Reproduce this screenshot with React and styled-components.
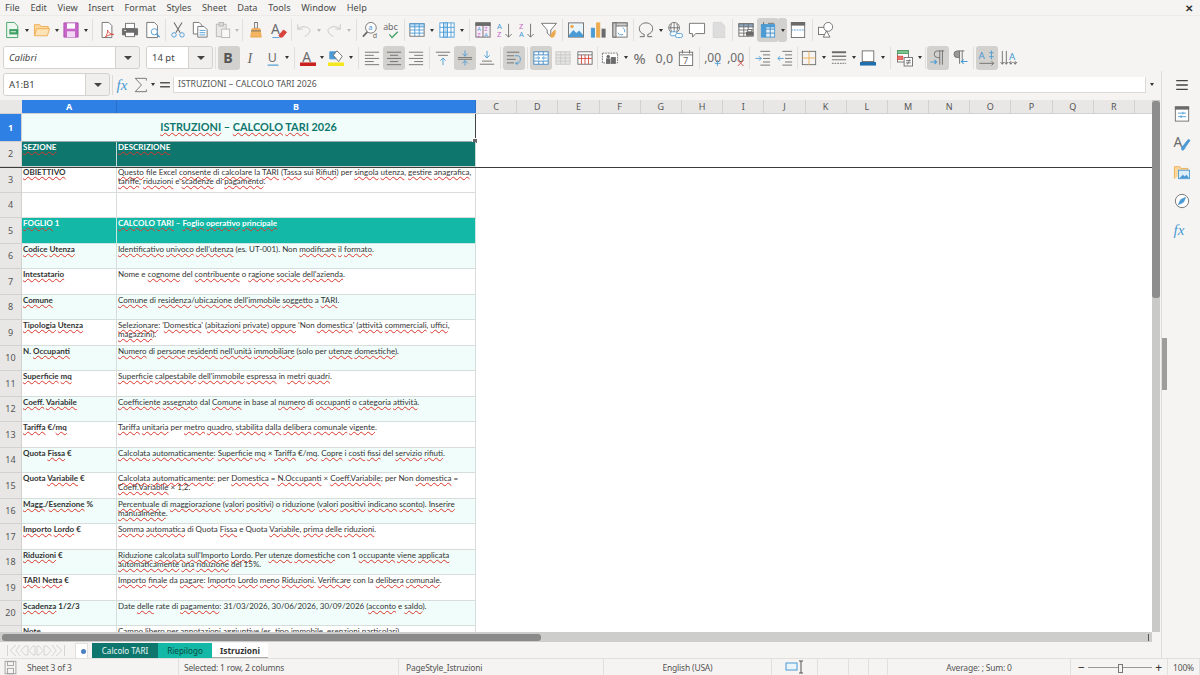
import React from 'react'
import styled, { createGlobalStyle } from 'styled-components'

const Global = createGlobalStyle`
  html, body { margin: 0; padding: 0; background: #f5f4f2; overflow: hidden; }
  * { box-sizing: border-box; }
`

const BLUE = '#4a9ad4'
const GREY = '#6b6b6b'
const ORANGE = '#eeaa4e'
const PINK = '#c768c9'
const RED = '#d8443c'
const GREEN = '#3d9f62'

const Svg = ({ children, size = 16 }) => (
  <svg width={size} height={size} viewBox="0 0 18 18" fill="none" stroke={GREY} strokeWidth="1" overflow="visible">
    {children}
  </svg>
)

const Txt = ({ x, y, size = 8, fill = BLUE, weight = 400, family = '"Noto Sans", sans-serif', style, children }) => (
  <text x={x} y={y} fontSize={size} fill={fill} stroke="none" fontWeight={weight} fontFamily={family} fontStyle={style}>{children}</text>
)

const Lines = ({ rows, color = GREY }) => rows.map(([x1, x2, y], i) => <path key={i} d={`M${x1} ${y}H${x2}`} stroke={color} />)

const GridIcon = ({ color = BLUE, fill = '#bcdcf3', stroke = GREY }) => (
  <>
    <rect x="1" y="2" width="16" height="14" fill="#fff" stroke={stroke} />
    <rect x="1" y="2" width="16" height="3.500" fill={fill} stroke={color} />
    <path d="M6.500 2v14M11.500 2v14M1 9h16M1 12.500h16" stroke={color} />
  </>
)

const icons = {
  newDoc: <><path d="M3 .5h8.500l4 4v13H3z" fill="#eef7f0" stroke={GREEN} /><rect x="6" y="8" width="10" height="6" fill={GREEN} stroke="none" /><path d="M7.500 11h6" stroke="#fff" /></>,
  open: <><path d="M.5 15.500V3h6l1.500 2h8v2.500" fill="#fbd79b" stroke={ORANGE} /><path d="M.5 15.500l2.500-8h14.500l-2.500 8z" fill="#fde3b5" stroke={ORANGE} /></>,
  save: <><path d="M1 1h16v16H1z" fill={PINK} stroke="#ad4eb0" /><rect x="4.500" y="1.500" width="9" height="6" fill="#fff" stroke="none" /><rect x="4.500" y="10.500" width="9" height="6.500" fill="#f3d8f5" stroke="none" /></>,
  pdf: <><path d="M3.500 .5h7.500l3.500 3.500v13.500h-11z" fill="#fff" /><path d="M7 17c2-2 3-6 2.500-8 1 3 3 4.500 7 5-4 0-7 1-9.500 3z" stroke={RED} fill="none" /></>,
  print: <><rect x="4" y="1.500" width="10" height="6" fill="#fff" /><path d="M.5 7.500h17v7h-17z" fill={GREY} /><rect x="4" y="11.500" width="10" height="5" fill="#fff" /><path d="M2.500 9.500h2" stroke="#fff" /></>,
  preview: <><path d="M2 .5h8.500l3.500 3.500v13.500h-12z" fill="#fff" /><circle cx="10.500" cy="11" r="3.500" stroke={BLUE} fill="#fff" /><path d="M13 13.500l3.500 3.500" stroke={BLUE} strokeWidth="1.500" /></>,
  cut: <><path d="M4.500 .5l7 11.500M13.500 .5l-7 11.500" stroke={GREY} strokeWidth="1.200" /><circle cx="4.500" cy="14.500" r="2.500" stroke={BLUE} /><circle cx="13.500" cy="14.500" r="2.500" stroke={BLUE} /></>,
  copy: <><path d="M1.500 .5h6.500l3 3v10H1.500z" fill="#fff" /><path d="M6.500 5h7l3.500 3.500v8.500H6.500z" fill="#fff" /><Lines color={BLUE} rows={[[8.500, 15, 9.500], [8.500, 15, 12], [8.500, 15, 14.500]]} /></>,
  paste: <g opacity=".45"><rect x="1.500" y="2.500" width="11" height="14" fill="#ddd" /><rect x="4.500" y=".5" width="5" height="4" fill="#bbb" /><rect x="7.500" y="8" width="9" height="9.500" fill="#fff" /></g>,
  clone: <><rect x="7.500" y=".5" width="3" height="6.500" stroke={GREY} fill="#fff" /><path d="M4.500 7.500h9l1.500 9.500h-12z" fill="#f3b562" stroke={ORANGE} /><path d="M3.500 10h11" stroke={GREY} /></>,
  clear: <><Txt x="0" y="14" size="15.500" fill={GREY}>A</Txt><path d="M9 15l5-6 3.500 2.500-4.500 5.500H10z" fill={RED} stroke={RED} /><path d="M1.500 17.500h8" stroke={BLUE} /></>,
  undo: <g stroke="#c4c4c4"><path d="M2 2.500v5.500h5.500" /><path d="M2 8c3-3.500 11-4 14 1-.5 3.500-3 6-6 7" /></g>,
  redo: <g stroke="#c4c4c4"><path d="M16 2.500v5.500h-5.500" /><path d="M16 8c-3-3.500-11-4-14 1 .5 3.500 3 6 6 7" /></g>,
  find: <><circle cx="10" cy="6.500" r="6" fill="#fff" stroke={GREY} /><Txt x="7" y="9.500" size="8.500" fill={BLUE}>a</Txt><path d="M6 11l-5 5.500" stroke={GREY} strokeWidth="2" /><Txt x="12" y="18" size="8" fill={GREY}>d</Txt></>,
  spell: <><Txt x="-1" y="9" size="10" fill={GREY}>abc</Txt><path d="M6 14l3 3.500 6.500-6.500" stroke={GREEN} strokeWidth="1.400" /></>,
  rowsGrid: <GridIcon />,
  colsGrid: <><rect x="1" y="1" width="16" height="16" fill="#fff" stroke={BLUE} /><rect x="5" y="1" width="4.500" height="16" fill="#bcdcf3" stroke={BLUE} /><path d="M1 6h16M1 11.500h16M13.500 1v16" stroke={BLUE} /></>,
  sort: <><rect x="1" y="1" width="16" height="16" fill="#f6ecf6" /><rect x="1" y="1" width="16" height="3" fill={GREY} /><path d="M9 4v13" /><Txt x="2.500" y="10.500" size="6.500" fill={BLUE}>A</Txt><Txt x="2.500" y="16.500" size="6.500" fill={PINK}>Z</Txt><Txt x="10.500" y="10.500" size="6.500" fill={PINK}>Z</Txt><Txt x="10.500" y="16.500" size="6.500" fill={BLUE}>A</Txt></>,
  asc: <><Txt x="0" y="8" size="8.500" fill={BLUE}>A</Txt><Txt x="0" y="17" size="8.500" fill={PINK}>Z</Txt><path d="M13 2v15M9.500 13.500L13 17l3.500-3.500" /></>,
  desc: <><Txt x="0" y="8" size="8.500" fill={PINK}>Z</Txt><Txt x="0" y="17" size="8.500" fill={BLUE}>A</Txt><path d="M13 2v15M9.500 13.500L13 17l3.500-3.500" /></>,
  filter: <><path d="M.5 1.500h17l-6.500 7.500v7l-4-3.500V9z" fill="#fff" stroke={GREY} /><path d="M11 17c0-3 1-5 5-8-.5 2 1 4-2 8z" fill={ORANGE} stroke={ORANGE} /></>,
  image: <><rect x=".5" y="1" width="17" height="16" fill="#eaf4fb" /><circle cx="4.500" cy="5" r="2" fill={ORANGE} stroke="none" /><path d="M1 15l5-6 3.500 3.500 3-3 4.500 5V17H1z" fill={BLUE} stroke="none" /></>,
  chart: <><rect x="1.500" y="7" width="3.500" height="10" fill={BLUE} stroke={BLUE} /><rect x="7.500" y="1" width="3.500" height="16" fill={ORANGE} stroke={ORANGE} /><rect x="13.500" y="8" width="3.500" height="9" fill={GREY} /></>,
  pivot: <><rect x="1" y="1" width="16" height="16" fill="#fff" /><rect x="1" y="1" width="16" height="3.500" fill="#ccc" /><rect x="1" y="1" width="3.500" height="16" fill="#ccc" /><path d="M7 12c0 2.500 2.500 3 5.500 2M12 6.500c2 1 3 3 2 5" stroke={BLUE} /></>,
  omega: <path d="M2 16.500h5v-2.500c-3.500-1-5.500-3.500-5.500-6.500C1.500 3.500 5 1 9 1s7.500 2.500 7.500 6.500c0 3-2 5.500-5.500 6.500v2.500h5" strokeWidth="1.100" />,
  link: <><circle cx="8" cy="6.500" r="6" fill="#fff" /><path d="M2 6.500h12M8 .5v12M5 2c-1 3-1 6 0 9M11 2c1 3 1 6 0 9" /><rect x="3.500" y="11" width="8" height="4.500" rx="2.200" fill="#fff" stroke={BLUE} /><rect x="9.500" y="13" width="8" height="4.500" rx="2.200" fill="#fff" stroke={BLUE} /></>,
  comment: <path d="M.5 1.500h17v11.500h-10l-3.500 4v-4H.5z" fill="#fff" />,
  note: <path d="M2.500 .5h9l4 4v13h-13z" fill="#ddd" stroke="#d4d4d4" />,
  headers: <><GridIcon color={GREY} fill="#8aa8c2" /><rect x="9" y="11" width="8.500" height="4.500" fill={GREY} stroke="none" /><rect x="11" y="8.500" width="4.500" height="2.500" fill="#fff" /></>,
  freeze: <><rect x="1.500" y="3" width="15" height="14" fill="#e4f0fa" stroke={BLUE} /><path d="M1.500 8h15M1.500 12.500h15M6.500 3v14M11.500 3v14" stroke="#3f86c0" /><rect x="1.500" y="3" width="5" height="14" fill={BLUE} stroke="none" /><rect x="1.500" y="3" width="15" height="3" fill={BLUE} stroke="none" /><path d="M9 1.500h7M4 0v3" stroke={GREY} /></>,
  split: <><rect x="1.500" y=".5" width="15" height="17" fill="#fff" /><rect x="1.500" y=".5" width="15" height="3" fill={GREY} /><path d="M1.500 9h15" stroke={BLUE} strokeDasharray="2 1" /></>,
  shapes: <><rect x=".5" y="6" width="9" height="8" fill="#fff" /><circle cx="11.500" cy="5.500" r="5" fill="#fff" /><path d="M6 17l3.500-7 4 7z" fill="#fff" /></>,
  bold: <Txt x="2.500" y="15" size="16" weight="700" fill="#555">B</Txt>,
  italic: <Txt x="5" y="15" size="16" style="italic" fill={GREY} family='"Liberation Serif", serif'>I</Txt>,
  underline: <><Txt x="3" y="13" size="14" fill={GREY}>U</Txt><path d="M3 17h12" stroke={BLUE} strokeWidth="1.300" /></>,
  fontColor: <><Txt x="2.500" y="13" size="15.500" fill={GREY}>A</Txt><rect y="14" width="18" height="4" fill="#c9211e" stroke="none" /></>,
  highlight: <><path d="M2 2h8v8H2z" fill={BLUE} stroke={BLUE} /><path d="M6 6l4-5 6 6-4 6z" fill="#fff" /><rect y="14" width="18" height="4" fill="#f5e71f" stroke="none" /></>,
  left: <Lines rows={[[1, 17, 2.500], [1, 11, 6], [1, 17, 9.500], [1, 11, 13], [1, 17, 16.500]]} />,
  center: <Lines rows={[[1, 17, 2.500], [4.500, 13.500, 6], [1, 17, 9.500], [4.500, 13.500, 13], [1, 17, 16.500]]} />,
  right: <Lines rows={[[1, 17, 2.500], [7, 17, 6], [1, 17, 9.500], [7, 17, 13], [1, 17, 16.500]]} />,
  top: <><Lines rows={[[1, 17, 2.500], [3.500, 14.500, 6]]} /><path d="M9 17V9M6 12l3-3 3 3" stroke={BLUE} /></>,
  middle: <><Lines rows={[[1, 17, 8.500], [1, 17, 10.500]]} /><path d="M9 .5V7M6 4l3 3 3-3M9 17.500V12M6 15l3-3 3 3" stroke={BLUE} /></>,
  bottom: <><Lines rows={[[3.500, 14.500, 12.500], [1, 17, 16]]} /><path d="M9 1v8M6 6l3 3 3-3" stroke={BLUE} /></>,
  wrap: <><Lines rows={[[1, 15, 2.500], [1, 9, 6.500], [1, 11, 10.500], [1, 9, 14.500]]} /><path d="M10 6.500h3.500c3.500 0 3.500 7 0 8.500h-2.500M13 13l-2 2 2 2" stroke={BLUE} /></>,
  merge: <><rect x="1" y="2" width="16" height="14" fill="#fff" stroke="#3f86c0" /><path d="M1 5.500h16M1 12.500h16M6.500 2v3.500M11.500 2v3.500M6.500 12.500V16M11.500 12.500V16" stroke="#3f86c0" /><path d="M2.500 9h5M5.500 7l2 2-2 2M15.500 9h-5M12.500 7l-2 2 2 2" stroke={BLUE} /></>,
  mergeOff: <g opacity=".6"><rect x="1" y="2" width="16" height="14" fill="#ddd" stroke="#aaa" /><path d="M1 5.500h16M1 9h16M1 12.500h16M6.500 2v14M11.500 2v14" stroke="#aaa" /></g>,
  splitCells: <><rect x="1" y="2" width="16" height="14" fill="#fff" /><path d="M1 5.500h16" /><path d="M5 5.500V16M9 5.500V16M13 5.500V16M1 9.500h16" stroke={RED} /></>,
  currency: <><rect x=".5" y="3.500" width="17" height="11" fill="#fff" strokeDasharray="2 1" /><rect x="5" y="10" width="4" height="5" fill={GREY} /><rect x="10.500" y="8.500" width="4.500" height="6.500" fill={GREY} /><circle cx="7" cy="7.500" r="1.500" fill={GREY} /></>,
  percent: <Txt x="-.5" y="15.500" size="16.500" fill={GREY}>%</Txt>,
  number: <Txt x="-.5" y="15" size="14" fill={GREY}>0,0</Txt>,
  date: <><rect x="1.500" y="2.500" width="15" height="15" fill="#fff" /><path d="M1.500 5.500h15M5 0v4M13 0v4" /><Txt x="5.500" y="15.500" size="10.500" fill={GREY}>7</Txt></>,
  addDec: <><Txt x="-1" y="14" size="13.500" fill={GREY}>,00</Txt><path d="M14 11.500v6.500M11 15h6.500" stroke={BLUE} /></>,
  delDec: <><Txt x="-1" y="14" size="13.500" fill={GREY}>,00</Txt><path d="M11 11.500l6.500 6.500M17.500 11.500L11 18" stroke={RED} /></>,
  indent: <><Lines rows={[[6, 17, 1.500], [9, 17, 5.500], [9, 17, 9.500], [9, 17, 13.500], [6, 17, 17]]} /><path d="M.5 9.500H7M4.500 7L7 9.500 4.500 12" stroke={BLUE} /></>,
  outdent: <><Lines rows={[[6, 17, 1.500], [9, 17, 5.500], [9, 17, 9.500], [9, 17, 13.500], [6, 17, 17]]} /><path d="M7.500 9.500H1M3.500 7L1 9.500 3.500 12" stroke={BLUE} /></>,
  borders: <><rect x="1.500" y="1.500" width="15" height="15" stroke={GREY} /><path d="M9 1.500v15M1.500 9h15" stroke={ORANGE} /></>,
  lineStyle: <><path d="M1 2.500h16" strokeWidth="2.200" /><path d="M1 7h16" strokeWidth="1.500" /><path d="M1 11h16" /><path d="M1 15h16" strokeDasharray="2 1" /></>,
  borderColor: <><rect x="2.500" y="1" width="13" height="12" fill="#fff" /><rect y="13.500" width="18" height="4" fill="#1f6fae" stroke="none" /></>,
  cond: <><rect x=".5" y=".5" width="12.500" height="13" fill="#fff" /><rect x=".5" y=".5" width="12.500" height="3.500" fill="#7cc38d" stroke="#4f9d63" /><rect x=".5" y="7" width="6" height="3.500" fill="#e57a74" stroke={RED} /><rect x="8" y="8.500" width="9.500" height="9.500" fill="#fff" /><path d="M10 12h5.500M10 14.500h5.500M14.500 10.500l-3 6" /></>,
  ltr: <><path d="M16 1H8.500a3.500 3.500 0 0 0 0 7.500H11V1M14 1v15.500M11 8.500v8" /><path d="M.5 13.500h7M5 11l2.500 2.500L5 16" stroke={BLUE} strokeWidth="1.200" /></>,
  rtl: <><path d="M14 1H6a3.500 3.500 0 0 0 0 7.500h2.500V1M11.500 1v10M8.500 8.500v7" fill="#999" /><path d="M17.500 13h-7M13 10.500L10.500 13l2.500 2.500" stroke={BLUE} strokeWidth="1.200" /></>,
  textH: <><Txt x="-.5" y="10" size="11" fill={BLUE}>A</Txt><path d="M14 .5v10M11.500 3h5M11.500 7.500h5" stroke={BLUE} /><path d="M.5 15h16M14 12.500l2.500 2.500-2.500 2.500" /></>,
  textV: <><Txt x="9" y="11" size="11" fill={BLUE}>A</Txt><path d="M1.500 1v15M-.5 13.500l2 2.500 2-2.500M6 1v15M4 13.500L6 16l2-2.500M11 12.500V16M9 13.500l2 2.500 2-2.500M16 12.500V16M14 13.500l2 2.500 2-2.500" /></>,
  lines: <path d="M2.500 4h13M2.500 9h13M2.500 14h13" strokeWidth="1.500" stroke="#444" />,
  props: <><rect x="1.500" y="1" width="15" height="16" fill="#fff" /><rect x="1.500" y="1" width="15" height="2.500" fill={GREY} /><path d="M4.500 8h9M4.500 12h9" stroke={BLUE} /><path d="M10 6.500v3M8 10.500v3" stroke={BLUE} /></>,
  styleA: <><Txt x="-.5" y="14" size="15.500" fill={GREY}>A</Txt><path d="M9 17c2 0 3-1 3.500-3L18 6l-2-1-5.500 7c-2 1-2.500 3-1.500 5z" fill={BLUE} stroke={BLUE} /></>,
  gallery: <><path d="M.5 16.500V3h6L8 5h7.500v2" fill="#fbd79b" stroke={ORANGE} /><rect x="5" y="7" width="12.500" height="9.500" fill="#dcecf8" stroke={BLUE} /><path d="M6 16l4-4 2 2 2-2 3 4z" fill={BLUE} stroke="none" /></>,
  navigator: <><circle cx="9" cy="9" r="7.500" fill="#fff" /><path d="M13 5l-2.500 5.500L5 13l2.500-5.500z" fill={BLUE} stroke={BLUE} /></>,
  fx: <Txt x="-.5" y="15" size="17" style="italic" fill={BLUE} family='"Liberation Serif", serif'>fx</Txt>,
  sigma: <path d="M15 4V1.500H2.500L9.500 9l-7 7.500H15V14" />,
  equals: <path d="M3.500 6.500h11M3.500 11h11" strokeWidth="1.800" stroke="#555" />,
  saveSmall: <><rect x="2.500" y="1.500" width="13" height="15" stroke="#999" /><rect x="5.500" y="2" width="7" height="4.500" stroke="#999" /><rect x="5.500" y="10" width="7" height="6.500" stroke="#999" /></>
}

const Page = styled.div`
  width: 1200px;
  height: 675px;
  display: flex;
  flex-direction: column;
  overflow: hidden;
  background: #f5f4f2;
  color: #3c3c3c;
  font-family: "Noto Sans", sans-serif;
  font-size: 9.5px;
`

const MenuBar = styled.div`
  height: 16px;
  flex: none;
  display: flex;
  align-items: center;
  padding: 0 5px;
  gap: 10.700px;
  color: #4a4a4a;
  font-size: 9.200px;
  border-bottom: 1px solid #ecebe8;
`

const Close = styled.span`
  margin-left: auto;
  margin-right: 2px;
  font-size: 10px;
  font-weight: 700;
  color: #333;
`

const Toolbar = styled.div`
  flex: none;
  height: ${p => p.$h}px;
  padding-left: ${p => p.$pad}px;
  display: flex;
  align-items: center;
`

const Btn = styled.div`
  flex: none;
  width: ${p => p.$w || 22}px;
  height: 24px;
  display: flex;
  align-items: center;
  justify-content: center;
  border-radius: 3px;
  background: ${p => (p.$active ? '#d3d1cd' : 'transparent')};
`

const Drop = styled.div`
  flex: none;
  width: ${p => p.$w || 8}px;
  height: 24px;
  display: flex;
  align-items: center;
  justify-content: center;
  border-radius: 0 3px 3px 0;
  background: ${p => (p.$active ? '#d3d1cd' : 'transparent')};
  &::after {
    content: '';
    border-left: 2.500px solid transparent;
    border-right: 2.500px solid transparent;
    border-top: 3px solid ${p => (p.$off ? '#bbb' : '#333')};
  }
`

const Sep = styled.div`
  flex: none;
  width: ${p => p.$w}px;
  height: 22px;
  display: flex;
  justify-content: center;
  &::after {
    content: '';
    width: 1px;
    background: #e2e0dd;
  }
`

const Combo = styled.div`
  flex: none;
  width: ${p => p.$w}px;
  height: 23px;
  margin-right: ${p => p.$mr || 0}px;
  display: flex;
  border: 1px solid #d4d2ce;
  border-radius: 3px;
  overflow: hidden;
  background: #f0efed;
`

const ComboText = styled.div`
  flex: 1;
  background: #fff;
  padding-left: 5px;
  display: flex;
  align-items: center;
  font-size: 9.500px;
  font-style: ${p => (p.$italic ? 'italic' : 'normal')};
  color: #444;
  border-right: 1px solid #d4d2ce;
`

const ComboArrow = styled.div`
  flex: none;
  width: 23px;
  display: flex;
  align-items: center;
  justify-content: center;
  &::after {
    content: '';
    border-left: 4px solid transparent;
    border-right: 4px solid transparent;
    border-top: 4px solid #444;
  }
`

const Workspace = styled.div`
  flex: 1;
  display: flex;
  min-height: 0;
`

const Main = styled.div`
  width: 1161px;
  flex: none;
  display: flex;
  flex-direction: column;
`

const FormulaBar = styled.div`
  height: 29px;
  flex: none;
  padding: 2px 3px 4px;
  display: flex;
  align-items: center;
`

const FormulaSep = styled.div`
  width: 1px;
  height: 20px;
  margin: 0 2px;
  background: #dddbd8;
`

const FormulaInput = styled.div`
  flex: none;
  width: 973px;
  height: 16px;
  margin-left: 2px;
  padding-left: 4px;
  background: #fff;
  border: 1px solid #dcdad7;
  border-width: 0 1px 1px 1px;
  display: flex;
  align-items: center;
  font-size: 8.700px;
  color: #555;
`

const SheetWrap = styled.div`
  height: 532px;
  flex: none;
  display: flex;
`

const Sheet = styled.div`
  width: 1152px;
  flex: none;
  overflow: hidden;
  background: #fff;
  font-family: Lato, sans-serif;
`

const ColHeads = styled.div`
  height: 14px;
  display: flex;
  background: #e8e7e5;
  border-bottom: 1px solid #d2d1cf;
`

const Corner = styled.div`
  width: 22px;
  flex: none;
`

const ColHead = styled.div`
  flex: none;
  width: ${p => p.$w}px;
  display: flex;
  align-items: center;
  justify-content: center;
  font: ${p => (p.$sel ? 700 : 400)} 9px "Noto Sans", sans-serif;
  color: ${p => (p.$sel ? '#fff' : '#555')};
  background: ${p => (p.$sel ? '#2f80e4' : 'transparent')};
  border-right: 1px solid ${p => (p.$sel ? '#2a70c8' : '#d2d1cf')};
`

const Row = styled.div`
  height: ${p => p.$h}px;
  display: flex;
  position: relative;
  z-index: ${p => (p.$frozen ? 2 : 0)};
  box-shadow: ${p => (p.$frozen ? '0 1px 0 #3d3d3d' : 'none')};
`

const RowHead = styled.div`
  width: 22px;
  flex: none;
  display: flex;
  align-items: center;
  justify-content: center;
  font: ${p => (p.$sel ? 700 : 400)} 9px "Noto Sans", sans-serif;
  color: ${p => (p.$sel ? '#fff' : '#555')};
  background: ${p => (p.$sel ? '#2f80e4' : '#e8e7e5')};
  border-bottom: 1px solid #d2d1cf;
  border-right: 1px solid #d2d1cf;
`

const palette = {
  mint: { bg: '#f0fdfa', fg: '#333', line: '#d5dedc' },
  white: { bg: '#ffffff', fg: '#333', line: '#d8dcdb' },
  dark: { bg: '#0f766e', fg: '#ffffff', line: '#c9d8d5' },
  teal: { bg: '#14b8a6', fg: '#ffffff', line: '#c9e6e1' }
}

const Cell = styled.div`
  flex: none;
  width: ${p => p.$w}px;
  padding: 1px 1px 0;
  line-height: 9.300px;
  font-size: 8px;
  white-space: pre;
  overflow: hidden;
  background: ${p => palette[p.$tone].bg};
  color: ${p => palette[p.$tone].fg};
  font-weight: ${p => (p.$bold ? 700 : 400)};
  border-right: 1px solid ${p => palette[p.$tone].line};
  border-bottom: 1px solid ${p => palette[p.$tone].line};
`

const TitleCell = styled.div`
  flex: none;
  width: 454px;
  position: relative;
  display: flex;
  align-items: center;
  justify-content: center;
  padding-bottom: 2px;
  background: #f0fdfa;
  color: #0f766e;
  font-size: 10.900px;
  font-weight: 700;
  border-right: 1px solid #444;
  border-bottom: 1px solid #9aa;
  &::after {
    content: '';
    position: absolute;
    right: -3px;
    bottom: -3px;
    width: 4px;
    height: 4px;
    background: #666;
    border: 1px solid #fff;
    z-index: 3;
  }
`

const Misspelt = styled.span`
  text-decoration: underline wavy #d9372c;
  text-decoration-thickness: .6px;
  text-underline-offset: .5px;
  text-decoration-skip-ink: none;
`

const VTrack = styled.div`
  width: 8px;
  flex: none;
  background: #c9c9c8;
`

const VThumb = styled.div`
  width: 8px;
  height: 197px;
  margin-top: 1px;
  border-radius: 3px;
  background: #8d8d8d;
`

const HTrack = styled.div`
  height: 10px;
  flex: none;
  width: 1152px;
  padding: 2px 0 1px 2px;
  background: #cdcdcc;
  position: relative;
`

const HThumb = styled.div`
  width: 539px;
  height: 100%;
  border-radius: 3px;
  background: #8a8a8a;
`

const HEnd = styled.div`
  position: absolute;
  right: 3px;
  top: 2px;
  width: 1px;
  height: 7px;
  background: #555;
`

const TabBar = styled.div`
  flex: 1;
  min-height: 0;
  display: flex;
  align-items: stretch;
  padding-top: 1px;
`

const TabNav = styled.div`
  width: 60px;
  margin-left: 6px;
  display: flex;
  align-items: center;
`

const NewTab = styled.div`
  width: 13px;
  margin: 0 4px 0 9px;
  display: flex;
  align-items: center;
  justify-content: flex-end;
  padding-right: 1px;
  background: #fff;
  border: 1px solid #e2e0dd;
  border-width: 1px 1px 0 1px;
  &::after {
    content: '';
    width: 5px;
    height: 5px;
    border-radius: 50%;
    background: #4a7fc0;
  }
`

const tabTones = {
  dark: 'background: #0f766e; color: #e8f7f4;',
  teal: 'background: #14b8a6; color: #0c4a40;',
  active: 'background: #fff; color: #333; font-weight: 700; font-size: 8.400px; border-bottom: 1px solid #aaa;'
}

const Tab = styled.div`
  width: ${p => p.$w}px;
  display: flex;
  align-items: center;
  justify-content: center;
  font-size: 8.100px;
  ${p => tabTones[p.$tone]}
`

const Sidebar = styled.div`
  flex: 1;
  display: flex;
  flex-direction: column;
  align-items: center;
  padding: 6px 0 0 1px;
  gap: 13px;
  border-left: 1px solid #dedcd9;
  position: relative;
`

const SideHandle = styled.div`
  position: absolute;
  left: 0;
  top: 267px;
  width: 5px;
  height: 52px;
  background: #9d9d9d;
`

const StatusBar = styled.div`
  height: 17px;
  flex: none;
  display: flex;
  align-items: stretch;
  border-top: 1px solid #e2e0dd;
  font-size: 8.500px;
  letter-spacing: -.2px;
  color: #555;
`

const StatusCell = styled.div`
  flex: none;
  width: ${p => p.$w}px;
  padding: 0 ${p => p.$padR || 0}px 0 ${p => p.$pad || 0}px;
  display: flex;
  align-items: center;
  gap: ${p => p.$gap || 0}px;
  justify-content: ${p => (p.$center ? 'center' : 'flex-start')};
  border-right: 1px solid #e2e0dd;
  white-space: nowrap;
`

const ZoomTrack = styled.div`
  flex: 1;
  height: 1px;
  margin: 0 3px;
  background: #999;
  position: relative;
  &::after {
    content: '';
    position: absolute;
    left: 30px;
    top: -3px;
    width: 3px;
    height: 7px;
    background: #f5f4f2;
    border: 1px solid #777;
  }
`

const Sign = styled.span`
  font-size: 12px;
  color: #333;
`

const Bar = ({ items }) =>
  items.map((it, i) => {
    const [name, w, active] = it
    if (name === 'sep') return <Sep key={i} $w={w} />
    if (name === 'drop') return <Drop key={i} $w={w} $active={active} />
    if (name === 'dropOff') return <Drop key={i} $w={w} $off />
    return <Btn key={i} $w={w} $active={active}><Svg>{icons[name]}</Svg></Btn>
  })

const standard = [
  ['newDoc'], ['drop'], ['open'], ['drop', 7], ['save'], ['drop'], ['sep', 5],
  ['pdf', 23], ['print', 23], ['preview', 23], ['sep', 3],
  ['cut'], ['copy'], ['paste', 23], ['dropOff', 6], ['sep', 5],
  ['clone'], ['clear', 23], ['sep', 3],
  ['undo'], ['dropOff'], ['redo'], ['dropOff'], ['sep', 6],
  ['find'], ['spell'], ['sep', 3],
  ['rowsGrid'], ['drop'], ['colsGrid'], ['drop'], ['sep', 6],
  ['sort'], ['asc'], ['desc'], ['filter'], ['sep', 5],
  ['image'], ['chart'], ['pivot'], ['sep', 4],
  ['omega'], ['drop', 7], ['link'], ['comment'], ['note'], ['sep', 5],
  ['headers'], ['freeze', 22, true], ['drop', 8, true], ['split'], ['sep', 6], ['shapes']
]

const formatting = [
  ['sep', 5], ['bold', 22, true], ['italic'], ['underline', 21], ['drop'], ['sep', 6],
  ['fontColor', 21], ['drop', 7], ['highlight'], ['drop'], ['sep', 6],
  ['left'], ['center', 22, true], ['right'], ['sep', 5],
  ['top'], ['middle', 22, true], ['bottom'], ['sep', 5],
  ['wrap', 22, true], ['sep', 5], ['merge', 22, true], ['mergeOff'], ['splitCells'], ['sep', 3],
  ['currency'], ['drop', 10], ['percent'], ['number'], ['date'], ['sep', 4],
  ['addDec', 23], ['delDec', 23], ['sep', 5],
  ['indent'], ['outdent'], ['sep', 2],
  ['borders'], ['drop'], ['lineStyle'], ['drop', 7], ['borderColor'], ['drop'], ['sep', 7],
  ['cond'], ['drop', 7], ['sep', 4],
  ['ltr', 22, true], ['rtl'], ['sep', 5], ['textH', 22, true], ['textV']
]

const menus = ['File', 'Edit', 'View', 'Insert', 'Format', 'Styles', 'Sheet', 'Data', 'Tools', 'Window', 'Help']
const cols = 'CDEFGHIJKLMNOPQR'.split('')

// words in [brackets] get the spell check underline
const Marked = ({ text }) =>
  text.split(/\[([^\]]+)\]/).map((part, i) =>
    i % 2 ? <Misspelt key={i}>{part}</Misspelt> : part
  )

const rows = [
  { tone: 'white', a: '[OBIETTIVO]', b: '[Questo] file Excel [consente] di [calcolare] la [TARI] ([Tassa] sui [Rifiuti]) per [singola] [utenza], [gestire] [anagrafica],\n[tariffe], [riduzioni] e [scadenze] di [pagamento].' },
  { tone: 'white', a: '', b: '' },
  { tone: 'teal', bold: true, a: '[FOGLIO] 1', b: '[CALCOLO] [TARI] – [Foglio] [operativo] [principale]' },
  { a: '[Codice] [Utenza]', b: '[Identificativo] [univoco] [dell\'utenza] (es. UT-001). Non [modificare] [il] [formato].' },
  { a: '[Intestatario]', b: 'Nome e [cognome] del [contribuente] o [ragione] [sociale] [dell\'azienda].' },
  { a: '[Comune]', b: '[Comune] di [residenza]/[ubicazione] [dell\'immobile] [soggetto] a [TARI].' },
  { a: '[Tipologia] [Utenza]', b: '[Selezionare]: \'[Domestica]\' ([abitazioni] [private]) [oppure] \'Non [domestica]\' ([attività] [commerciali], [uffici],\n[magazzini]).' },
  { a: 'N. [Occupanti]', b: '[Numero] di [persone] [residenti] [nell\'unità] [immobiliare] (solo per [utenze] [domestiche]).' },
  { a: '[Superficie] [mq]', b: '[Superficie] [calpestabile] [dell\'immobile] [espressa] in [metri] [quadri].' },
  { a: '[Coeff.] [Variabile]', b: '[Coefficiente] [assegnato] dal [Comune] in base al [numero] di [occupanti] o [categoria] [attività].' },
  { a: '[Tariffa] €/[mq]', b: '[Tariffa] [unitaria] per [metro] [quadro], [stabilita] [dalla] [delibera] [comunale] [vigente].' },
  { a: 'Quota [Fissa] €', b: '[Calcolata] [automaticamente]: [Superficie] [mq] × [Tariffa] €/[mq]. [Copre] i [costi] [fissi] del [servizio] [rifiuti].' },
  { a: 'Quota [Variabile] €', b: '[Calcolata] [automaticamente]: per [Domestica] = [N.Occupanti] × [Coeff.Variabile]; per Non [domestica] =\n[Coeff.Variabile] × 1,2.' },
  { a: '[Magg.]/[Esenzione] %', b: '[Percentuale] di [maggiorazione] ([valori] [positivi]) o [riduzione] ([valori] [positivi] [indicano] [sconto]). [Inserire]\n[manualmente].' },
  { a: '[Importo] [Lordo] €', b: '[Somma] [automatica] di Quota [Fissa] e Quota [Variabile], [prima] [delle] [riduzioni].' },
  { a: '[Riduzioni] €', b: '[Riduzione] [calcolata] [sull\'Importo] [Lordo]. Per [utenze] [domestiche] con 1 [occupante] [viene] [applicata]\n[automaticamente] [una] [riduzione] del 15%.' },
  { a: '[TARI] [Netta] €', b: '[Importo] [finale] da [pagare]: [Importo] [Lordo] [meno] [Riduzioni]. [Verificare] con la [delibera] [comunale].' },
  { a: '[Scadenza] 1/2/3', b: 'Date [delle] rate di [pagamento]: 31/03/2026, 30/06/2026, 30/09/2026 ([acconto] e [saldo]).' },
  { a: 'Note', b: 'Campo [libero] per [annotazioni] [aggiuntive] (es. [tipo] [immobile], [esenzioni] [particolari]).' }
]

const sideIcons = ['lines', 'props', 'styleA', 'gallery', 'navigator', 'fx']

export default function App() {
  return (
    <Page>
      <Global />
      <MenuBar>
        {menus.map(m => <span key={m}>{m}</span>)}
        <Close>✕</Close>
      </MenuBar>
      <Toolbar $h={28} $pad={1}><Bar items={standard} /></Toolbar>
      <Toolbar $h={27} $pad={3}>
        <Combo $w={137} $mr={6}><ComboText $italic>Calibri</ComboText><ComboArrow /></Combo>
        <Combo $w={67}><ComboText>14 pt</ComboText><ComboArrow /></Combo>
        <Bar items={formatting} />
      </Toolbar>
      <Workspace>
        <Main>
          <FormulaBar>
            <Combo $w={107}><ComboText>A1:B1</ComboText><ComboArrow /></Combo>
            <FormulaSep />
            <Btn $w={19}><Svg>{icons.fx}</Svg></Btn>
            <Btn $w={14}><Svg>{icons.sigma}</Svg></Btn>
            <Drop $w={10} />
            <Btn $w={13}><Svg>{icons.equals}</Svg></Btn>
            <FormulaInput>ISTRUZIONI – CALCOLO TARI 2026</FormulaInput>
            <Drop $w={12} />
          </FormulaBar>
          <SheetWrap>
            <Sheet>
              <ColHeads>
                <Corner />
                <ColHead $w={95} $sel>A</ColHead>
                <ColHead $w={359} $sel>B</ColHead>
                {cols.map(c => <ColHead key={c} $w={41.200}>{c}</ColHead>)}
              </ColHeads>
              <Row $h={27.500}>
                <RowHead $sel>1</RowHead>
                <TitleCell>
                  <span><Misspelt>ISTRUZIONI</Misspelt> – <Misspelt>CALCOLO</Misspelt> <Misspelt>TARI</Misspelt> 2026</span>
                </TitleCell>
              </Row>
              <Row $h={25.500} $frozen>
                <RowHead>2</RowHead>
                <Cell $w={95} $tone="dark" $bold><Marked text="[SEZIONE]" /></Cell>
                <Cell $w={359} $tone="dark" $bold><Marked text="[DESCRIZIONE]" /></Cell>
              </Row>
              {rows.map((r, i) => {
                const tone = r.tone || (i % 2 ? 'mint' : 'white')
                return (
                  <Row key={i} $h={25.500}>
                    <RowHead>{i + 3}</RowHead>
                    <Cell $w={95} $tone={tone} $bold><Marked text={r.a} /></Cell>
                    <Cell $w={359} $tone={tone} $bold={r.bold}><Marked text={r.b} /></Cell>
                  </Row>
                )
              })}
            </Sheet>
            <VTrack><VThumb /></VTrack>
          </SheetWrap>
          <HTrack><HThumb /><HEnd /></HTrack>
          <TabBar>
            <TabNav>
              <svg width="60" height="13" viewBox="0 0 60 13" fill="none" stroke="#d4d4d4">
                <path d="M1.500 1v11M10 1l-6 5.500 6 5.500M14 1l-4 5.500 4 5.500" />
                <path d="M19 2l-4 4.500 4 4.500h3V2zM27 2l-4 4.500 4 4.500h2V2z" />
                <path d="M33 2l4 4.500-4 4.500h-2V2zM41 2l4 4.500-4 4.500h-3V2z" />
                <path d="M46 1l4 5.500-4 5.500M50 1l6 5.500-6 5.500M58.500 1v11" />
              </svg>
            </TabNav>
            <NewTab />
            <Tab $w={66} $tone="dark">Calcolo TARI</Tab>
            <Tab $w={54} $tone="teal">Riepilogo</Tab>
            <Tab $w={56} $tone="active">Istruzioni</Tab>
          </TabBar>
        </Main>
        <Sidebar>
          <SideHandle />
          {sideIcons.map(n => <Svg key={n}>{icons[n]}</Svg>)}
        </Sidebar>
      </Workspace>
      <StatusBar>
        <StatusCell $w={179} $pad={3} $gap={9}><Svg size={15}>{icons.saveSmall}</Svg>Sheet 3 of 3</StatusCell>
        <StatusCell $w={220} $pad={5}>Selected: 1 row, 2 columns</StatusCell>
        <StatusCell $w={205} $pad={7}>PageStyle_Istruzioni</StatusCell>
        <StatusCell $w={168} $center>English (USA)</StatusCell>
        <StatusCell $w={46} $center $gap={2}>
          <svg width="22" height="14" viewBox="0 0 22 14" fill="none">
            <rect x="2" y="3" width="11" height="7" stroke="#4a9ad4" fill="#eaf4fb" />
            <path d="M17 1v12M15 1h4M15 13h4" stroke="#555" />
          </svg>
        </StatusCell>
        <StatusCell $w={31} />
        <StatusCell $w={20} />
        <StatusCell $w={19} />
        <StatusCell $w={183} $center>Average: ; Sum: 0</StatusCell>
        <StatusCell $w={97} $pad={7} $padR={5}>
          <Sign>−</Sign><ZoomTrack /><Sign>+</Sign>
        </StatusCell>
        <StatusCell $w={32} $center>100%</StatusCell>
      </StatusBar>
    </Page>
  )
}
